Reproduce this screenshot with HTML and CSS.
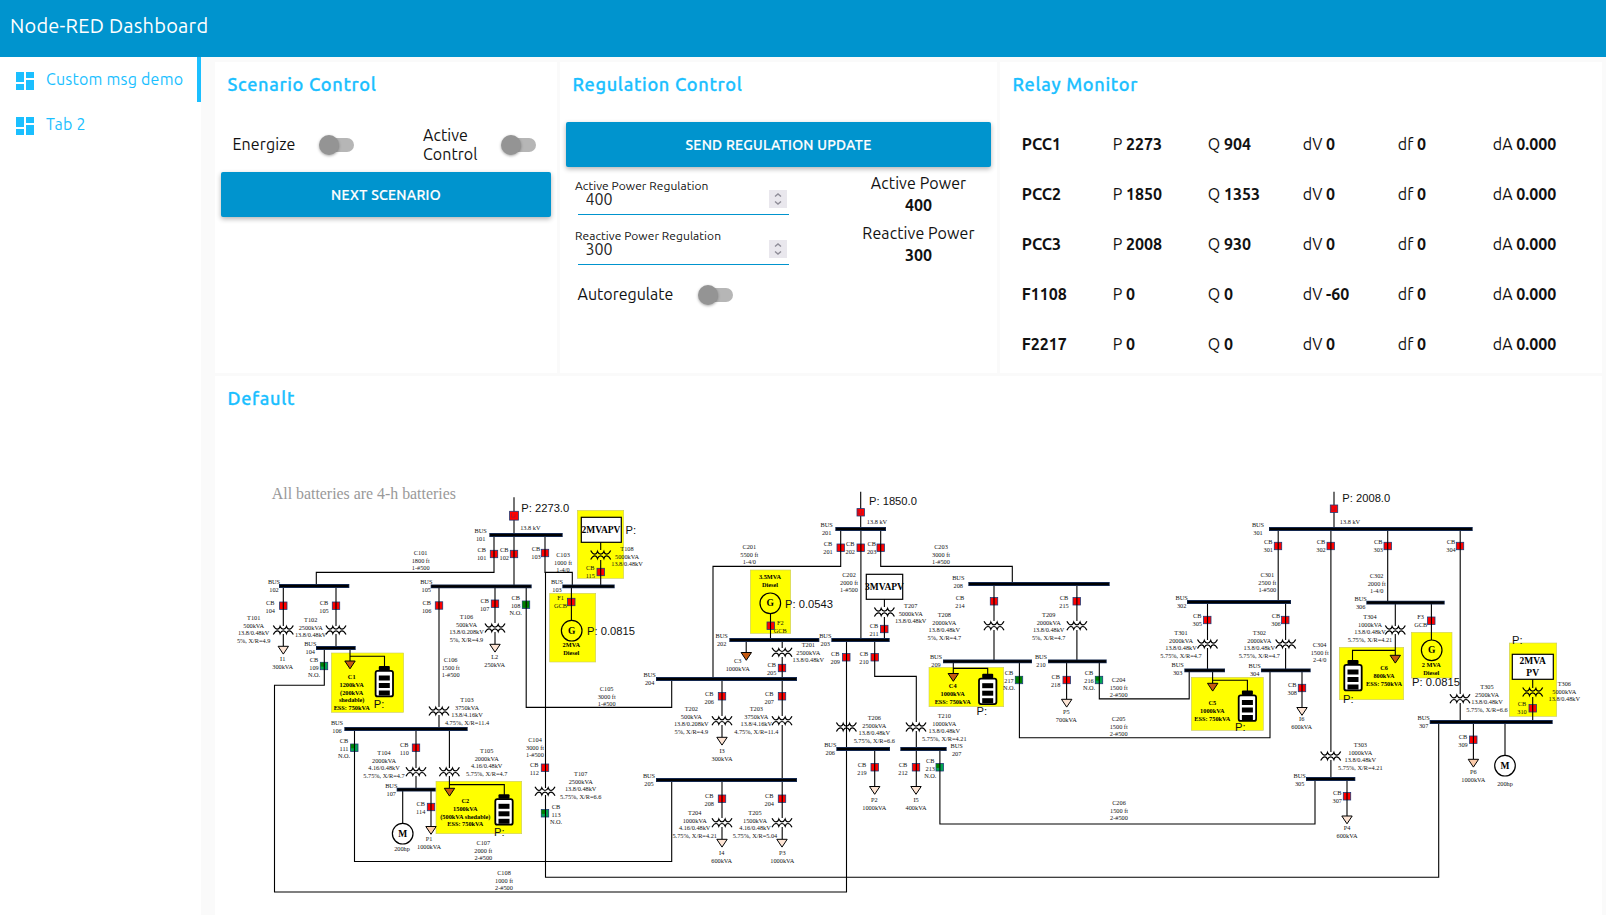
FILE: index.html
```html
<!DOCTYPE html>
<html lang="en">
<head>
<meta charset="utf-8">
<title>Node-RED Dashboard</title>
<link rel="stylesheet" href="styles.css">
</head>
<body>
<header class="toolbar"><h1 class="toolbar-title">Node-RED Dashboard</h1></header>
<div class="shell">
  <nav class="sidebar">
    <a class="nav-item nav-item-active">
      <svg class="nav-icon" viewBox="0 0 24 24"><path d="M3 13h8V3H3v10zm0 8h8v-6H3v6zm10 0h8V11h-8v10zm0-18v6h8V3h-8z"/></svg>
      <span class="nav-text">Custom msg demo</span>
    </a>
    <a class="nav-item">
      <svg class="nav-icon" viewBox="0 0 24 24"><path d="M3 13h8V3H3v10zm0 8h8v-6H3v6zm10 0h8V11h-8v10zm0-18v6h8V3h-8z"/></svg>
      <span class="nav-text">Tab 2</span>
    </a>
  </nav>
  <main class="content">
    <div class="row">
      <section class="card card-scenario">
        <h2 class="card-title">Scenario Control</h2>
        <div class="switches">
          <div class="switch-cell"><span class="label-energize">Energize</span><span class="switch"></span></div>
          <div class="switch-cell switch-cell-right"><span class="label-active">Active Control</span><span class="switch"></span></div>
        </div>
        <button class="btn">NEXT SCENARIO</button>
      </section>
      <section class="card card-regulation">
        <h2 class="card-title">Regulation Control</h2>
        <button class="btn">SEND REGULATION UPDATE</button>
        <div class="reg-row">
          <label class="field"><span class="field-label">Active Power Regulation</span>
            <span class="field-box"><input class="field-input" value="400"><span class="spinner"><svg viewBox="0 0 18 18"><path d="M6 6.500 9 4l3 2.500M6 11.500 9 14l3-2.500"/></svg></span></span>
          </label>
          <div class="readout"><span class="readout-name">Active Power</span><b>400</b></div>
        </div>
        <div class="reg-row">
          <label class="field"><span class="field-label">Reactive Power Regulation</span>
            <span class="field-box"><input class="field-input" value="300"><span class="spinner"><svg viewBox="0 0 18 18"><path d="M6 6.500 9 4l3 2.500M6 11.500 9 14l3-2.500"/></svg></span></span>
          </label>
          <div class="readout"><span class="readout-name">Reactive Power</span><b>300</b></div>
        </div>
        <div class="auto-row"><span class="label-auto">Autoregulate</span><span class="switch"></span></div>
      </section>
      <section class="card card-relay">
        <h2 class="card-title title-wide">Relay Monitor</h2>
        <div class="relay">
          <b>PCC1</b><span>P <b>2273</b></span><span>Q <b>904</b></span><span>dV <b>0</b></span><span>df <b>0</b></span><span>dA <b>0.000</b></span>
          <b>PCC2</b><span>P <b>1850</b></span><span>Q <b>1353</b></span><span>dV <b>0</b></span><span>df <b>0</b></span><span>dA <b>0.000</b></span>
          <b>PCC3</b><span>P <b>2008</b></span><span>Q <b>930</b></span><span>dV <b>0</b></span><span>df <b>0</b></span><span>dA <b>0.000</b></span>
          <b>F1108</b><span>P <b>0</b></span><span>Q <b>0</b></span><span>dV <b>-60</b></span><span>df <b>0</b></span><span>dA <b>0.000</b></span>
          <b>F2217</b><span>P <b>0</b></span><span>Q <b>0</b></span><span>dV <b>0</b></span><span>df <b>0</b></span><span>dA <b>0.000</b></span>
        </div>
      </section>
    </div>
    <section class="card card-default">
      <h2 class="card-title title-wide">Default</h2>
      <svg id="diagram" class="diagram" viewBox="215 422 1387 493" width="1387" height="493">
        <defs>
          <g id="transformer">
            <path class="coil" d="M-10-4.500Q-8-.8-6-.8T-3.200-3.600Q-2-.8 0-.8T3.200-3.600Q4-.8 6-.8T10-4.500"/>
            <path class="coil" d="M-10 4.500Q-8 .8-6 .8T-3.200 3.600Q-2 .8 0 .8T3.200 3.600Q4 .8 6 .8T10 4.500"/>
          </g>
          <g id="battery">
            <rect x="-5.500" y="-4" width="11" height="4.500" rx="1"/>
            <rect class="cell" x="-8.700" y=".9" width="17.400" height="25.500" rx="2"/>
            <rect x="-5.500" y="5.500" width="11" height="5"/><rect x="-5.500" y="13" width="11" height="5"/><rect x="-5.500" y="20.500" width="11" height="5"/>
          </g>
          <path id="load" d="M-5.200 0H5.200L0 7.800Z"/>
        </defs>
      </svg>
    </section>
  </main>
</div>
<script src="diagram.js"></script>
</body>
</html>
```
FILE: styles.css
```css
* { box-sizing: border-box; }
body { margin: 0; width: 1606px; height: 915px; overflow: hidden; background: #fafafa; color: #111; font: 16px/19px Ubuntu, "Noto Sans", "Open Sans", sans-serif; }
.toolbar { height: 57px; background: #0094ce; padding: 11px 10px; }
.toolbar-title { margin: 0; color: #fff; font-size: 20px; font-weight: 400; line-height: 30px; letter-spacing: .22px; white-space: nowrap; }
.shell { display: flex; height: 858px; }
.sidebar { width: 201px; background: #fff; flex: none; }
.nav-item { display: flex; height: 45px; padding: 12px 0 0 13px; color: #1bbfff; border-right: 4px solid transparent; }
.nav-item-active { border-right-color: #1bbfff; }
.nav-icon { width: 24px; height: 24px; fill: #1bbfff; margin-right: 9px; }
.nav-text { line-height: 21px; white-space: nowrap; letter-spacing: .23px; }
.content { padding: 5px 4px 0 14px; flex: none; width: 1405px; }
.row { display: flex; gap: 3px; height: 311px; }
.card { background: #fff; }
.card-scenario { width: 342px; padding: 0 6px; }
.card-regulation { width: 437px; padding: 0 6px; }
.card-relay { width: 602px; }
.card-default { margin-top: 3px; height: 539px; width: 1387px; padding: 0; }
.card-title { margin: 0; height: 46px; padding-left: 6.500px; font-size: 18.200px; font-weight: 500; line-height: 45px; color: #1bbfff; white-space: nowrap; -webkit-text-stroke: .3px #1bbfff; letter-spacing: .66px; }
.title-wide { padding-left: 12.500px; }
.switches { display: flex; height: 64px; padding: 9px 0 0 11.500px; align-items: center; }
.switch-cell { display: flex; flex: none; align-items: center; width: 190.500px; height: 40px; }
.switch-cell-right { width: 130px; }
.label-energize { flex: none; width: 90.500px; letter-spacing: .1px; }
.label-active { flex: none; width: 82px; padding-right: 20px; line-height: 19px; letter-spacing: .05px; }
.switch { display: block; flex: none; position: relative; width: 31px; height: 14px; border-radius: 7px; background: #b6b6b6; }
.switch::before { content: ""; position: absolute; left: -4px; top: -3px; width: 20px; height: 20px; border-radius: 50%; background: #949494; box-shadow: 0 1px 3px rgba(0,0,0,.35); }
.btn { display: block; width: 100%; height: 45px; border: 0; border-radius: 2px; background: #0094ce; color: #fff; font: 500 14px/45px Ubuntu, "Noto Sans", "Open Sans", sans-serif; padding: 1px 0 0; box-shadow: 0 2px 5px rgba(0,0,0,.3); letter-spacing: .25px; -webkit-text-stroke: .2px #fff; }
.card-regulation .btn { margin-top: 14px; }
.reg-row { display: flex; height: 50px; }
.field { flex: none; width: 273px; padding: 11px 0 0 9px; }
.field-label { display: block; font-size: 12px; line-height: 15px; height: 12px; white-space: nowrap; letter-spacing: .06px; }
.field-box { display: flex; width: 211px; height: 25px; margin-left: 3px; border-bottom: 1px solid #0094ce; padding-right: 2px; }
.field-input { flex: 1; min-width: 0; border: 0; background: none; padding: 0 0 0 7.500px; height: 18px; font: inherit; color: #222; outline: 0; }
.spinner { width: 18px; height: 18px; background: #e9e7ed; }
.spinner svg { display: block; fill: none; stroke: #8f8d98; stroke-width: 1.4; }
.readout { display: flex; flex-direction: column; align-items: center; flex: none; width: 145px; margin-left: 7px; padding-top: 5px; line-height: 22px; white-space: nowrap; }
.readout-name { letter-spacing: .1px; }
.auto-row { display: flex; align-items: center; padding: 18px 0 0 11.500px; }
.label-auto { width: 124.500px; }
.relay { display: grid; grid-template-columns: 91px 95px 95px 95px 95px 100px; grid-auto-rows: 50px; line-height: 50px; padding: 11px 0 0 21.800px; white-space: nowrap; }
.diagram { display: block; }
.wire { stroke: #000; stroke-width: 1.1; fill: none; }
.bus { stroke: #14284f; stroke-width: 3.8; }
.bus-core { stroke: #000; stroke-width: 2.200; }
.coil { stroke: #000; stroke-width: 1.200; fill: none; }
.cell { fill: #fff; stroke: #000; stroke-width: 1.800; }
.zone { fill: #ff0; stroke: #c9c96a; stroke-width: .6; }
.box { fill: #fff; stroke: #000; stroke-width: 1.200; }
.ring { fill: none; stroke: #000; stroke-width: 1.200; }
.load { stroke: #000; stroke-width: 1; }
.breaker { fill: #f00; stroke: #203a76; stroke-width: .8; }
.breaker-open { fill: #00a650; stroke: #203a76; stroke-width: .8; }
.breaker-flag { fill: #008000; }
.note { font: 6.300px "Liberation Serif", serif; fill: #111; text-anchor: middle; }
.note-bold { font-weight: bold; fill: #000; }
.mark { font: bold 9.500px "Liberation Serif", serif; text-anchor: middle; }
.power { font: 11.200px "Liberation Sans", sans-serif; fill: #111; }
.caption { font: 15.860px "Liberation Serif", serif; fill: #999; }
```
FILE: diagram.js
```js
const svg = document.getElementById('diagram');
const parts = [];
const put = s => parts.push(s);

// Text block: centre x, centre y of the first line, lines separated by "|"
function note(x, y, text, pitch = 7.6, cls = '') {
  text.split('|').forEach((t, i) => put(`<text class="note ${cls}" x="${x}" y="${(y + 2 + i * pitch).toFixed(1)}">${t}</text>`));
}
const bold = (x, y, text) => note(x, y, text, 7.8, 'note-bold');
const rect = (cls, x1, y1, x2, y2) => put(`<rect class="${cls}" x="${x1}" y="${y1}" width="${x2 - x1}" height="${y2 - y1}"/>`);
const wire = d => put(`<path class="wire" d="${d}"/>`);

// Highlighted zones
[[331.3,653,403.7,712.3],[577.3,510.3,623.7,578.3],[549.7,593.3,595.7,662],[436,781.3,521.7,833.7],
 [750.3,570,790.7,633.3],[929,667.3,1003.7,706.7],[1191.3,677.3,1263.3,730.3],[1339.3,647.3,1403.7,699.7],
 [1411.3,632.3,1452,678],[1509.3,643,1556.7,716.3]].forEach(z => rect('zone', ...z));

// Circuit breakers: x, y, label x, label y, label, open
const breakers = [
 [283.3,605.7,270.3,603,'CB|104'],[336,605.7,324,603,'CB|105'],[439,605.5,426.7,603,'CB|106'],[324,666,314,660,'CB|109|N.O.',1],
 [494,554,481.7,550,'CB|101'],[514,554,504.3,550,'CB|102'],[545,553,536,549,'CB|103'],[600.7,572,590.3,568,'CB|115'],
 [495,603.7,484.7,601,'CB|107'],[526,604.7,515.7,598,'CB|108|N.O.',2],[571.3,602,560.5,598,'F1|GCB'],
 [354.3,747.7,344,741,'CB|111|N.O.',1],[416,747.7,404.3,745,'CB|110'],[431,807,420.7,804,'CB|114'],
 [545,767.7,534.3,765,'CB|112'],[545,813.3,556,807,'CB|113|N.O.',1],[782,668,771.7,665,'CB|205'],
 [722,696.3,709.3,694,'CB|206'],[782,696.3,769.3,694,'CB|207'],[722,798.7,709.3,796,'CB|208'],[782,798.7,769.3,796,'CB|204'],
 [840.7,547.7,828,544,'CB|201'],[860.7,547.7,850.3,544,'CB|202'],[880.7,547.7,871.7,544,'CB|203'],
 [770.7,625.7,780.3,623,'F2|GCB'],[884.3,629,874,626,'CB|211'],[846.3,657.3,835.3,654,'CB|209'],[874.7,657.3,864,654,'CB|210'],
 [994,601.3,960,598,'CB|214'],[1076.7,601.3,1064,598,'CB|215'],[1019,680,1009,673,'CB|217|N.O.',2],[1066.7,680,1055.7,677,'CB|218'],
 [1099,680,1089,673,'CB|216|N.O.',1],[874.7,767.3,862,765,'CB|219'],[916,767.3,903,765,'CB|212'],[939.7,767.3,930.3,761,'CB|213|N.O.',1],
 [1278,546,1268.3,542,'CB|301'],[1330.7,546,1321,542,'CB|302'],[1387.7,546,1378.3,542,'CB|303'],[1460,546,1451,542,'CB|304'],
 [1207.3,620,1197.3,616,'CB|305'],[1285.3,620,1276,616,'CB|306'],[1302,688,1292.3,685,'CB|308'],[1431.3,620.7,1420.7,617,'F3|GCB'],
 [1532.7,708.3,1522,704,'CB|310'],[1473.3,739.7,1463,737,'CB|309'],[1347,796.3,1337.3,793,'CB|307']
];
breakers.forEach(([x, y, lx, ly, t, open]) => {
  put(`<rect class="${open ? 'breaker-open' : 'breaker'}" x="${x - 3.7}" y="${y - 3.7}" width="7.4" height="7.4"/>`);
  if (open) put(`<rect class="breaker-flag" x="${x - 3.4}" y="${y - 3.4}" width="${open === 2 ? 6.4 : 3.6}" height="${open === 2 ? 6.4 : 4}"/>`);
  note(lx, ly, t);
});

// Grid connection breakers
[[514,515.7,4.4,497.3,535],[860.7,512.3,3.7,491.7,529],[1334,508.7,3.7,491.7,529]].forEach(([x, y, r, y1, y2]) => {
  wire(`M${x} ${y1}V${y2}`);
  rect('breaker', x - r, y - r, x + r, y + r);
  put(`<path d="M${x - 2.5} ${y - 2.5}v4h3.500v-3" fill="none" stroke="#82204a" stroke-width=".6"/>`);
});

// Cables and feeders
['M494 535V572.4H316.3V586','M514 535V586','M545 535V572.4H572.300V586','M545.5 572V788M545.5 795V877.300H1438.700V722',
 'M283.300 586V626M283.300 634V646','M336 586V626M336 634V648','M439 586V707M439 715V729','M324.300 648V685.300H274.500V892H846.500V640',
 'M350 648V661M350 656.300H384.500V667','M495 586V623M495 632V644','M526.200 586V707.400H671.700V679','M571.400 586V620',
 'M600.700 542V550M600.700 560V586','M354.500 729V861.500H671.700V780','M416 729V768M416 776V790','M449.400 729V768M449.400 776V788M449.400 784.600H504.300V795',
 'M402.700 790V823M431 790V826','M713 679V566.400H840.700V529','M860.900 529V640','M880.700 529V566.400H1012.300V584',
 'M770.500 614V640M746.200 640V652M782.200 640V648M782.200 657V716M782.200 725V780','M722 679V716M722 725V737',
 'M722 780V818M722 827V839M782.200 780V818M782.200 827V839','M884.400 599V607M884.400 617V640','M874.700 640V676.400H916.300V722M916.300 731V786M874.700 749V786',
 'M994 584V621M994 630V661M1076.900 584V621M1076.900 630V661','M953.300 661V674M953.300 668.400H987.700V675','M1019.400 661V737.800H1270V670.300',
 'M1066.600 661V699','M1099.300 661V698.900H1189.200V670.300','M939.900 749V824H1315V779','M1278.200 529V602M1330.900 529V752M1330.900 760V779',
 'M1387.700 529V602M1460.200 529V694M1460.200 703V722','M1207.500 602V640M1207.500 648V670M1285.600 602V640M1285.600 648V670',
 'M1212.600 670V683M1212.600 680.300H1247.400V692','M1302 670V707','M1395.300 603V626M1395.300 634V655M1395.300 650.400H1352.500V660',
 'M1431.400 603V640','M1532.700 679V688M1532.700 697V722','M1473.400 722V759M1505 722V755','M1347 779V816'].forEach(wire);

// Buses: x1, x2, y, label x, label y, number
[[279,349.300,586,274,582,102],[430.700,531.700,586.300,426.300,582,105],[316,355.700,648,310.300,644,104],[489.300,562.700,535,480.700,531,101],
 [562.300,614.700,586.300,557,582,103],[344.300,467.700,729,337,723,106],[396.700,435.700,789.700,391.300,786,107],[656,797,679,649.700,675,204],
 [656,797,780,649,776,205],[729.300,819.300,640,721.700,636,202],[831.300,889.700,640,825.300,636,203],[835.300,886,529,826.700,525,201],
 [968.300,1109.700,584,958.300,578,208],[943,1032,661.300,936,657,209],[1048,1106.700,661.300,1041,657,210],[836.300,890,749,830.300,745,206],
 [900.300,946.700,749,956.700,746,207],[1269,1472.700,529,1258,525,301],[1187,1291,602,1181.700,598,302],[1184.300,1225,670.300,1177.700,665,303],
 [1261,1310.700,670.300,1254.700,666,304],[1366.300,1444.700,602.700,1360.700,599,306],[1429.700,1552.700,722,1423.700,718,307],
 [1306,1355.300,779,1299.700,776,305]].forEach(([a, b, y, lx, ly, n]) => {
  put(`<path class="bus" d="M${a} ${y}H${b}"/><path class="bus-core" d="M${a + .8} ${y}H${b - .8}"/>`);
  note(lx, ly, 'BUS|' + n);
});

// Transformers: x, y, label x, label y, label
[[283.300,630,253.700,618,'T101|500kVA|13.8/0.48kV|5%, X/R=4.9'],[336,630,310.700,620,'T102|2500kVA|13.8/0.48kV'],
 [600.700,555,627,549,'T108|5000kVA|13.8/0.48kV'],[439,711,467,700,'T103|3750kVA|13.8/4.16kV|4.75%, X/R=11.4'],
 [495,628,466.500,617,'T106|500kVA|13.8/0.208kV|5%, X/R=4.9'],[416,771.700,384,753,'T104|2000kVA|4.16/0.48kV|5.75%, X/R=4.7'],
 [449.400,771.700,486.700,751,'T105|2000kVA|4.16/0.48kV|5.75%, X/R=4.7'],[545,791.300,580.700,774,'T107|2500kVA|13.8/0.48kV|5.75%, X/R=6.6'],
 [782,652.300,808.300,645,'T201|2500kVA|13.8/0.48kV'],[722,720.700,691.300,709,'T202|500kVA|13.8/0.208kV|5%, X/R=4.9'],
 [782,720.700,756.300,709,'T203|3750kVA|13.8/4.16kV|4.75%, X/R=11.4'],[722,822.700,694.700,813,'T204|1000kVA|4.16/0.48kV|5.75%, X/R=4.21'],
 [782,822.700,755,813,'T205|1500kVA|4.16/0.48kV|5.75%, X/R=5.04'],[884.400,612,910.700,606,'T207|5000kVA|13.8/0.48kV'],
 [994,625.700,944.300,615,'T208|2000kVA|13.8/0.48kV|5%, X/R=4.7'],[1076.900,625.700,1048.700,615,'T209|2000kVA|13.8/0.48kV|5%, X/R=4.7'],
 [846.400,727,874.300,718,'T206|2500kVA|13.8/0.48kV|5.75%, X/R=6.6'],[916,727,944.300,716,'T210|1000kVA|13.8/0.48kV|5.75%, X/R=4.21'],
 [1207.500,644,1181,633,'T301|2000kVA|13.8/0.48kV|5.75%, X/R=4.7'],[1285.700,644,1259.300,633,'T302|2000kVA|13.8/0.48kV|5.75%, X/R=4.7'],
 [1395.300,630,1370,617,'T304|1000kVA|13.8/0.48kV|5.75%, X/R=4.21'],[1460,698.700,1487,687,'T305|2500kVA|13.8/0.48kV|5.75%, X/R=6.6'],
 [1532.700,692,1564.300,684,'T306|5000kVA|13.8/0.48kV'],[1330.700,756,1360.300,745,'T303|1000kVA|13.8/0.48kV|5.75%, X/R=4.21']
].forEach(([x, y, lx, ly, t]) => { put(`<use href="#transformer" x="${x}" y="${y}"/>`); note(lx, ly, t); });

// Cable labels
[[420.700,553,'C101|1800 ft|1-#500'],[563,555,'C103|1000 ft|1-4/0'],[450.700,660,'C106|1500 ft|1-#500'],[606.700,689,'C105|3000 ft|1-#500'],
 [483.300,843,'C107|2000 ft|2-#500'],[504,873,'C108|1000 ft|2-#500'],[535,740,'C104|3000 ft|1-#500'],[749.300,547,'C201|5500 ft|1-4/0'],
 [849,575,'C202|2000 ft|1-#500'],[941,547,'C203|3000 ft|1-#500'],[1118.700,680,'C204|1500 ft|2-#500'],[1118.700,719,'C205|1500 ft|2-#500'],
 [1119,803,'C206|1500 ft|2-#500'],[1267.300,575,'C301|2500 ft|1-#500'],[1376.700,576,'C302|2000 ft|1-4/0'],[1319.700,645,'C304|1500 ft|2-4/0'],
 [530.300,527.700,'13.8 kV'],[877,522,'13.8 kV'],[1350,522,'13.8 kV'],[402,849,'200hp'],[1505,784,'200hp']].forEach(c => note(...c));

// Loads: x, top y, fill, label x, label y, label
const pale = '#fde4d4', mid = '#fbcbaa', dark = '#c55a11';
[[283.300,646.300,pale,282.700,659,'I1|300kVA'],[350,661,dark],[495,644.300,pale,494.700,657,'L2|250kVA'],[449.500,788.300,dark],
 [431,826.500,mid,0,0,''],[746.300,652.500,dark,737.700,661,'C3|1000kVA'],[722,737.300,pale,722,751,'I3|300kVA'],
 [722,839.300,pale,721.700,853,'I4|600kVA'],[782,839.300,pale,782.300,853,'P3|1000kVA'],[953.300,673.500,dark],
 [1066.700,699.300,pale,1066.300,712,'P5|700kVA'],[874.700,786.500,pale,874.300,800,'P2|1000kVA'],[916,786.500,pale,916,800,'I5|400kVA'],
 [1212.700,683.300,dark],[1302,707.500,pale,1301.700,719,'I6|600kVA'],[1395.300,655.300,dark],[1473.400,759.300,mid,1473.300,772,'P6|1000kVA'],
 [1347,816,pale,1347,828,'P4|600kVA']].forEach(([x, y, f, lx, ly, t]) => {
  put(`<use href="#load" class="load" fill="${f}" x="${x}" y="${y}"/>`);
  if (t) note(lx, ly, t);
});
note(429, 839, 'P1'); note(429, 847, '1000kVA');

// Batteries
[[384.300,670],[504,798.300],[987.700,677.700],[1247.400,694.500],[1353,664]].forEach(([x, y]) => put(`<use href="#battery" x="${x}" y="${y}"/>`));

// Machines
[[571.700,630.700,'G'],[770.300,603.300,'G'],[1431.700,650.300,'G'],[402.700,833.700,'M'],[1505,765.700,'M']].forEach(([x, y, t]) =>
  put(`<circle class="ring" cx="${x}" cy="${y}" r="10.300"/><text class="mark" x="${x}" y="${y + 3}">${t}</text>`));

// Solar plants
rect('box', 581.3, 517.3, 621.3, 542.3); rect('box', 866.3, 574.3, 902.7, 599.3); rect('box', 1512.3, 654.3, 1553.3, 679.3);
[[601,533.200,'2MVAPV'],[884.500,590,'3MVAPV'],[1532.700,664,'2MVA'],[1532.700,676,'PV']].forEach(([x, y, t]) =>
  put(`<text class="mark" x="${x}" y="${y}">${t}</text>`));

bold(351.7, 677, 'C1|1200kVA|(200kVA|shedable)|ESS: 750kVA');
bold(465.3, 801, 'C2|1500kVA|(500kVA shedable)|ESS: 750kVA');
bold(952.7, 686, 'C4|1000kVA|ESS: 750kVA');
bold(1212.3, 703, 'C5|1000kVA|ESS: 750kVA');
bold(1384, 668, 'C6|800kVA|ESS: 750kVA');
bold(571.3, 645, '2MVA|Diesel'); bold(770, 577, '3.5MVA|Diesel'); bold(1431.3, 665, '2 MVA|Diesel');

// Live power readings
[[521.300,512,'P: 2273.0'],[869,505,'P: 1850.0'],[1342.300,502,'P: 2008.0'],[625.500,533.700,'P:'],[587,635,'P: 0.0815'],
 [785,608,'P: 0.0543'],[1412,685.700,'P: 0.0815'],[373.700,708,'P:'],[494,835.700,'P:'],[976.500,715,'P:'],[1235,730.700,'P:'],
 [1343,702.700,'P:'],[1512,643.700,'P:']].forEach(([x, y, t]) => put(`<text class="power" x="${x}" y="${y}">${t}</text>`));

put('<text class="caption" x="271.800" y="499.300">All batteries are 4-h batteries</text>');
svg.insertAdjacentHTML('beforeend', parts.join(''));
```
